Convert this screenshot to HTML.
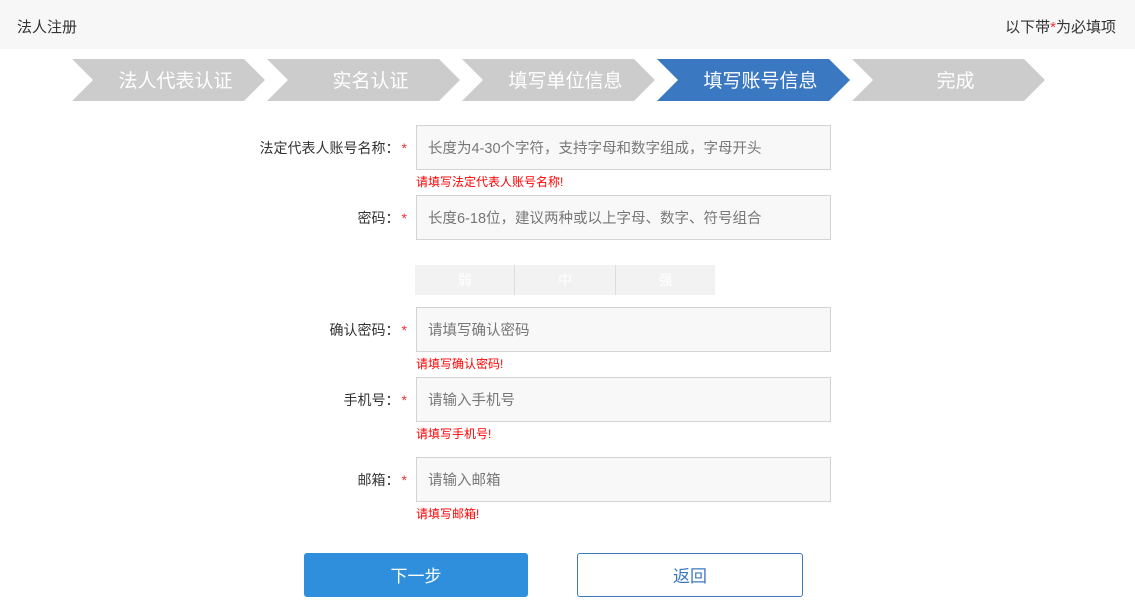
<!DOCTYPE html>
<html><head><meta charset="utf-8"><style>
*{margin:0;padding:0;box-sizing:border-box}
body{width:1135px;height:607px;background:#fff;font-family:"Liberation Sans","Noto Sans CJK SC",sans-serif;position:relative;overflow:hidden;color:#333}
.hdr{position:absolute;left:0;top:0;width:1135px;height:49px;background:#f7f7f7;font-size:15px}
.hdr .l{position:absolute;left:17px;top:16px}
.hdr .r{position:absolute;right:19px;top:16px}
.step{position:absolute;top:59px;width:193px;height:42px;background:#cccccc;clip-path:polygon(0 0,172px 0,193px 21px,172px 42px,0 42px,21px 21px);color:#fff;font-size:19px;line-height:46px;text-align:center;padding-left:14px}
.step.on{background:#3b78c2}
.lab{position:absolute;right:728px;font-size:14px;text-align:right;white-space:nowrap}
.lab i{color:#e33;font-style:normal;margin-left:2px}
.in{position:absolute;left:416px;width:415px;height:45px;border:1px solid #d3d3d3;background:#f8f8f8;font-size:14.5px;color:#777;padding-left:11px;line-height:47px}
.err{position:absolute;left:416px;font-size:12px;color:#f00}
.str{position:absolute;left:415px;top:265px;width:300px;height:30px;background:#f2f2f2;display:flex}
.str div{flex:1;color:#fff;font-size:14px;text-align:center;line-height:30px;border-right:1px solid #ddd}
.str div:last-child{border:none}
.btn{position:absolute;top:553px;height:44px;font-size:17px;text-align:center;line-height:45px;border-radius:3px}
</style></head><body>
<div class="hdr"><span class="l">法人注册</span><span class="r">以下带<span style="color:#e33">*</span>为必填项</span></div>
<div class="step" style="left:72px">法人代表认证</div>
<div class="step" style="left:267px">实名认证</div>
<div class="step" style="left:462px">填写单位信息</div>
<div class="step on" style="left:657px">填写账号信息</div>
<div class="step" style="left:852px">完成</div>

<div class="lab" style="top:138px">法定代表人账号名称：<i>*</i></div>
<div class="in" style="top:125px">长度为4-30个字符，支持字母和数字组成，字母开头</div>
<div class="err" style="top:173px">请填写法定代表人账号名称!</div>

<div class="lab" style="top:208px">密码：<i>*</i></div>
<div class="in" style="top:195px">长度6-18位，建议两种或以上字母、数字、符号组合</div>

<div class="str"><div>弱</div><div>中</div><div>强</div></div>

<div class="lab" style="top:320px">确认密码：<i>*</i></div>
<div class="in" style="top:307px">请填写确认密码</div>
<div class="err" style="top:355px">请填写确认密码!</div>

<div class="lab" style="top:390px">手机号：<i>*</i></div>
<div class="in" style="top:377px">请输入手机号</div>
<div class="err" style="top:425px">请填写手机号!</div>

<div class="lab" style="top:470px">邮箱：<i>*</i></div>
<div class="in" style="top:457px">请输入邮箱</div>
<div class="err" style="top:505px">请填写邮箱!</div>

<div class="btn" style="left:304px;width:224px;background:#2f8fdd;color:#fff;border:1px solid #2f8fdd">下一步</div>
<div class="btn" style="left:577px;width:226px;background:#fff;color:#3b78c2;border:1px solid #3b78c2">返回</div>
</body></html>
